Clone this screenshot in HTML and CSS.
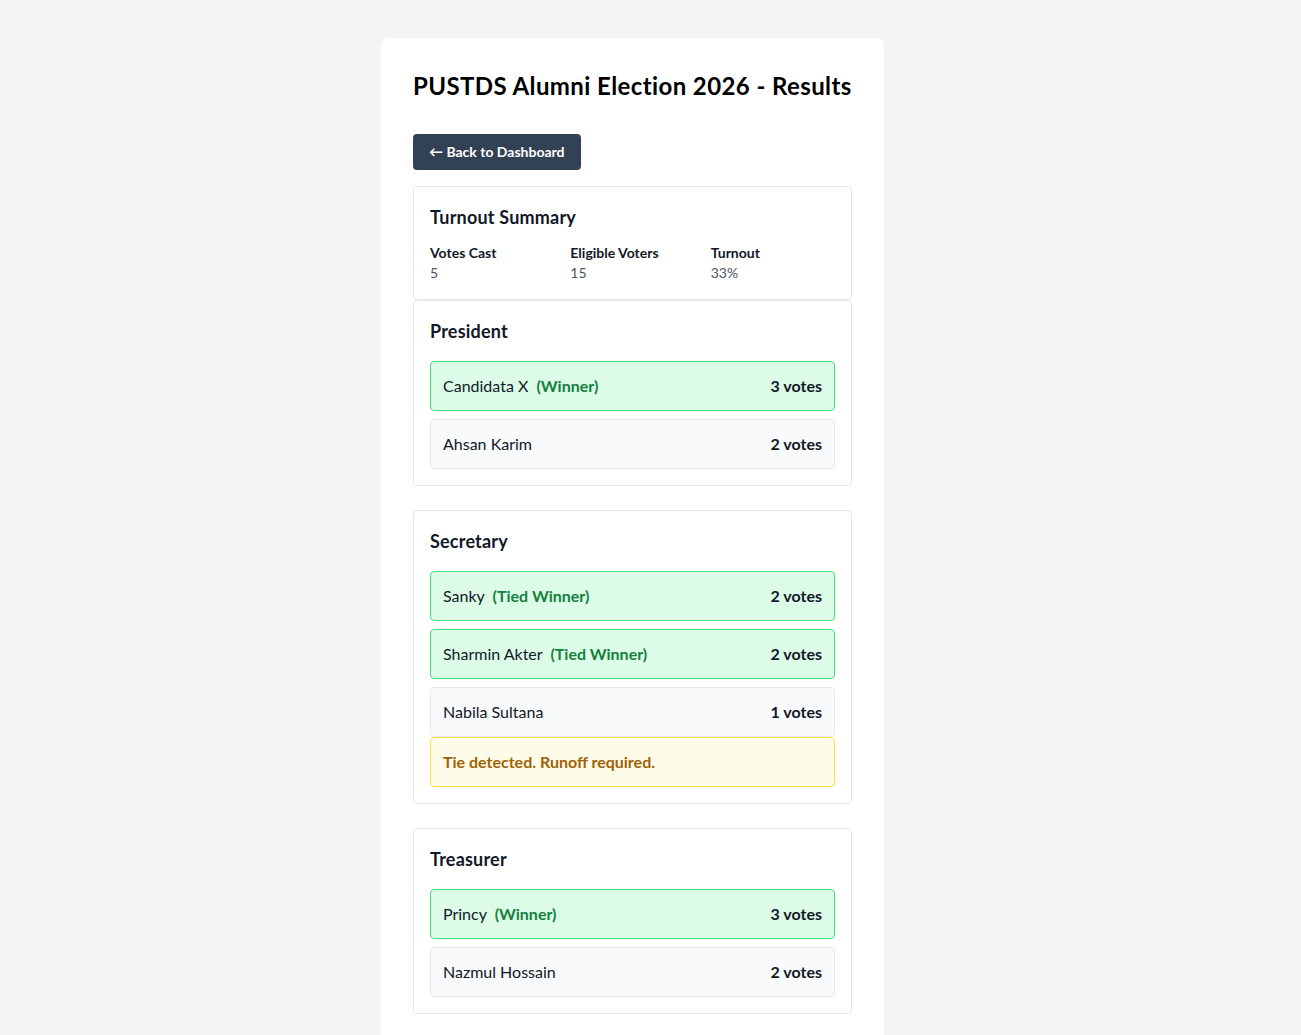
FILE: index.html
```html
<!DOCTYPE html>
<html lang="en">
<head>
    <meta charset="UTF-8">
    <meta name="viewport" content="width=device-width, initial-scale=1.0">
    <title>Election Results</title>
    <link rel="stylesheet" href="styles.css">
</head>
<body>
    <main class="page">
        <div class="card">
            <h1 class="title">PUSTDS Alumni Election 2026 - Results</h1>

            <a href="#" class="btn-back">&larr; Back to Dashboard</a>

            <section class="box turnout">
                <h2 class="box-title">Turnout Summary</h2>
                <div class="stats">
                    <div>
                        <div class="stat-label">Votes Cast</div>
                        <div class="stat-value">5</div>
                    </div>
                    <div>
                        <div class="stat-label">Eligible Voters</div>
                        <div class="stat-value">15</div>
                    </div>
                    <div>
                        <div class="stat-label">Turnout</div>
                        <div class="stat-value">33%</div>
                    </div>
                </div>
            </section>

            <section class="box position">
                <h2 class="box-title">President</h2>
                <div class="rows">
                    <div class="row winner">
                        <span>Candidata X <span class="tag">(Winner)</span></span>
                        <span class="votes">3 votes</span>
                    </div>
                    <div class="row">
                        <span>Ahsan Karim</span>
                        <span class="votes">2 votes</span>
                    </div>
                </div>
            </section>

            <section class="box position">
                <h2 class="box-title">Secretary</h2>
                <div class="rows">
                    <div class="row winner">
                        <span>Sanky <span class="tag">(Tied Winner)</span></span>
                        <span class="votes">2 votes</span>
                    </div>
                    <div class="row winner">
                        <span>Sharmin Akter <span class="tag">(Tied Winner)</span></span>
                        <span class="votes">2 votes</span>
                    </div>
                    <div class="row">
                        <span>Nabila Sultana</span>
                        <span class="votes">1 votes</span>
                    </div>
                </div>
                <div class="alert">Tie detected. Runoff required.</div>
            </section>

            <section class="box position">
                <h2 class="box-title">Treasurer</h2>
                <div class="rows">
                    <div class="row winner">
                        <span>Princy <span class="tag">(Winner)</span></span>
                        <span class="votes">3 votes</span>
                    </div>
                    <div class="row">
                        <span>Nazmul Hossain</span>
                        <span class="votes">2 votes</span>
                    </div>
                </div>
            </section>
        </div>
    </main>
</body>
</html>
```

FILE: styles.css
```css
/* General styles */
body {
    font-family: 'Lato', sans-serif;
    background-color: #f3f4f6;
    color: #111827;
    margin: 0;
    padding: 0;
}

.page {
    display: flex;
    justify-content: center;
    padding: 38px 36px 40px 0;
}

.card {
    width: 503px;
    box-sizing: border-box;
    background-color: #fff;
    border-radius: 8px;
    box-shadow: 0 1px 2px rgba(0, 0, 0, 0.04);
    padding: 32px;
}

.title {
    font-size: 24px;
    line-height: 32px;
    font-weight: 700;
    letter-spacing: 0.4px;
    color: #000;
    margin: 0 0 32px;
}

.btn-back {
    display: inline-block;
    background-color: #334155;
    color: #fff;
    text-decoration: none;
    font-size: 14px;
    line-height: 20px;
    font-weight: 700;
    padding: 8px 16px;
    border-radius: 4px;
    margin-bottom: 16px;
}

/* Boxes */
.box {
    border: 1px solid #e5e7eb;
    border-radius: 4px;
    padding: 16px;
}

.box.position {
    margin-bottom: 24px;
}

.box-title {
    font-size: 18px;
    line-height: 28px;
    font-weight: 700;
    letter-spacing: 0.2px;
    margin: 0 0 12px;
}

.position .box-title {
    margin-bottom: 16px;
}

.stats {
    display: grid;
    grid-template-columns: repeat(3, 1fr);
    gap: 16px;
    font-size: 14px;
    line-height: 20px;
}

.stat-label {
    font-weight: 700;
}

.stat-value {
    color: #4b5563;
}

/* Candidate rows */
.rows {
    display: flex;
    flex-direction: column;
    gap: 8px;
}

.row {
    display: flex;
    justify-content: space-between;
    align-items: center;
    font-size: 16px;
    line-height: 24px;
    padding: 12px;
    background-color: #f9fafb;
    border: 1px solid #e5e7eb;
    border-radius: 4px;
}

.row.winner {
    background-color: #dcfce7;
    border-color: #4ade80;
}

.tag {
    color: #15803d;
    font-weight: 700;
    margin-left: 4px;
}

.votes {
    font-weight: 700;
}

.alert {
    padding: 12px;
    font-size: 16px;
    line-height: 24px;
    font-weight: 700;
    color: #a16207;
    background-color: #fefce8;
    border: 1px solid #fde047;
    border-radius: 4px;
}
```
